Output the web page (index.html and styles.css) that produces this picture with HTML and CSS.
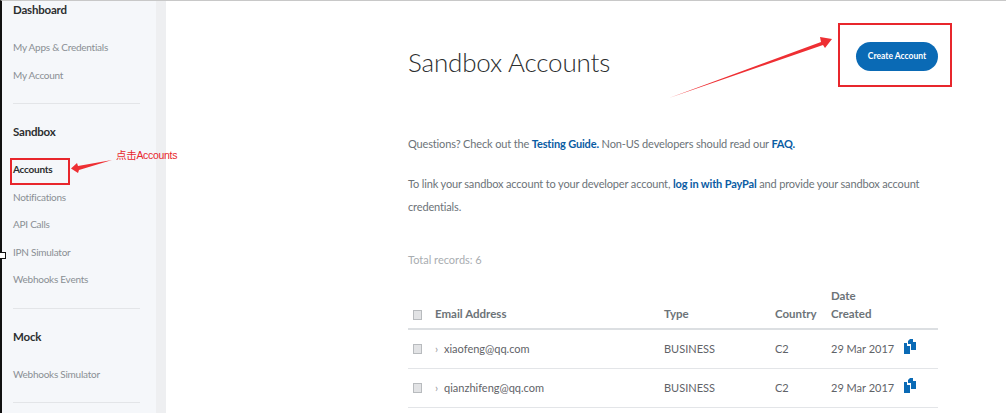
FILE: index.html
```html
<!DOCTYPE html>
<html lang="en">

<head>
    <meta charset="UTF-8">
    <title>Sandbox Accounts</title>
    <link rel="stylesheet" href="styles.css">
</head>

<body>
    <div class="page">
        <!--left menu-->
        <div class="side">
            <div class="group">
                <h4>Dashboard</h4>
                <a href="#">My Apps &amp; Credentials</a>
                <a href="#">My Account</a>
            </div>
            <div class="group">
                <h4>Sandbox</h4>
                <a href="#" class="current">Accounts</a>
                <a href="#">Notifications</a>
                <a href="#">API Calls</a>
                <a href="#">IPN Simulator</a>
                <a href="#">Webhooks Events</a>
            </div>
            <div class="group">
                <h4>Mock</h4>
                <a href="#">Webhooks Simulator</a>
            </div>
        </div>
        <div class="strip"></div>
        <!--main column-->
        <div class="main">
            <div class="head">
                <h1>Sandbox Accounts</h1>
                <a href="#" class="btn">Create Account</a>
            </div>
            <p class="one">Questions? Check out the <a href="#">Testing Guide.</a> Non-US developers should read our <a href="#">FAQ.</a></p>
            <p class="two">To link your sandbox account to your developer account, <a href="#">log in with PayPal</a> and provide your sandbox account credentials.</p>
            <p class="total">Total records: 6</p>
            <table>
                <thead>
                    <tr>
                        <th class="c1"><span class="check"></span></th>
                        <th class="c2">Email Address</th>
                        <th class="c3">Type</th>
                        <th class="c4">Country</th>
                        <th class="c5">Date<br>Created</th>
                        <th class="c6"></th>
                    </tr>
                </thead>
                <tbody>
                    <tr>
                        <td><span class="check"></span></td>
                        <td><span class="arrow">›</span>xiaofeng@qq.com</td>
                        <td>BUSINESS</td>
                        <td>C2</td>
                        <td>29 Mar 2017</td>
                        <td><svg class="copy" viewBox="0 0 13 15"><path d="M7 0h3v3h3v8h-5v-6h-3v-3z"/><path d="M1 4h3v3h3v8h-6z"/></svg></td>
                    </tr>
                    <tr>
                        <td><span class="check"></span></td>
                        <td><span class="arrow">›</span>qianzhifeng@qq.com</td>
                        <td>BUSINESS</td>
                        <td>C2</td>
                        <td>29 Mar 2017</td>
                        <td><svg class="copy" viewBox="0 0 13 15"><path d="M7 0h3v3h3v8h-5v-6h-3v-3z"/><path d="M1 4h3v3h3v8h-6z"/></svg></td>
                    </tr>
                </tbody>
            </table>
        </div>
    </div>

    <!--red marks drawn over the screenshot-->
    <div class="mark mark-menu"></div>
    <div class="mark mark-btn"></div>
    <span class="note">点击Accounts</span>
    <svg class="arrows" viewBox="0 0 1006 413">
        <path d="M112 160L78 166L77 163L71 168.500L78 173L79 170z"/>
        <path d="M669 98L821 42L820 37L832 39L825 48L823 45z"/>
    </svg>
    <div class="tick"></div>
</body>

</html>
```

FILE: styles.css
```css
* {
    margin: 0;
    padding: 0;
    box-sizing: border-box;
}

html,
body {
    height: 413px;
    overflow: hidden;
}

body {
    position: relative;
    background: #fff;
    font-family: Lato, "Open Sans", sans-serif;
    color: #5f6368;
}

a {
    text-decoration: none;
}

.page {
    display: flex;
    height: 413px;
    border-top: 1px solid #c8c8c8;
    border-left: 2px solid #111;
}

.side {
    width: 154px;
    padding-left: 11px;
    background: #f5f7fa;
    flex-shrink: 0;
}

.strip {
    width: 10px;
    background: #eeeff1;
    flex-shrink: 0;
}

.group {
    width: 127px;
    height: 205px;
    padding-top: 19px;
    border-bottom: 1px solid #e3e5e8;
}

.group:nth-child(1) {
    height: 103px;
    padding-top: 0;
}

.group:nth-child(3) {
    height: 94px;
}

.side h4 {
    font-size: 11.500px;
    font-weight: 700;
    line-height: 18px;
    letter-spacing: -0.2px;
    color: #2c2e2f;
    margin-bottom: 15px;
}

.side a {
    display: block;
    font-size: 10px;
    line-height: 27.600px;
    letter-spacing: -0.25px;
    color: #8a8f94;
}

.side a.current {
    color: #2c2e2f;
    font-weight: 700;
}

.main {
    width: 530px;
    margin-left: 242px;
    flex-shrink: 0;
}

.head {
    display: flex;
    justify-content: space-between;
    align-items: center;
    height: 112px;
}

.head h1 {
    font-size: 26px;
    font-weight: 300;
    line-height: 40px;
    letter-spacing: -0.2px;
    color: #2c2e2f;
    margin-top: 10px;
}

.btn {
    width: 82px;
    height: 29px;
    margin-top: -1px;
    border-radius: 15px;
    background: #0a6ab5;
    color: #fff;
    font-size: 8.500px;
    font-weight: 700;
    line-height: 29px;
    text-align: center;
}

.main p {
    font-size: 11px;
    line-height: 23px;
    letter-spacing: -0.15px;
    color: #6c7378;
}

.main p a {
    color: #0a5ca3;
    font-weight: 700;
}

.one {
    margin-top: 19px;
}

.two {
    margin-top: 17px;
}

.main p.total {
    margin-top: 30px;
    font-size: 11px;
    letter-spacing: 0;
    color: #a9adb1;
}

table {
    width: 530px;
    margin-top: 9px;
    border-collapse: collapse;
    table-layout: fixed;
}

th {
    height: 49px;
    padding-bottom: 5px;
    vertical-align: bottom;
    text-align: left;
    font-size: 11.500px;
    font-weight: 700;
    line-height: 18px;
    color: #6c7378;
    border-bottom: 2px solid #dcdfe2;
}

th.c1 {
    padding-bottom: 8px;
}

td {
    height: 39px;
    font-size: 11px;
    color: #5f6368;
    border-bottom: 1px solid #e3e5e8;
}

.c1 {
    width: 27px;
}

.c2 {
    width: 229px;
}

.c3 {
    width: 111px;
}

.c4 {
    width: 56px;
}

.c5 {
    width: 72px;
}

.check {
    display: block;
    width: 9px;
    height: 10px;
    margin-left: 5px;
    background: #e2e3e5;
    border: 1px solid #b8bbbe;
}

.arrow {
    display: inline-block;
    width: 9px;
    color: #999;
}

.copy {
    display: block;
    width: 13px;
    height: 15px;
    margin-top: -5px;
    fill: #0a6ab5;
}

.mark {
    position: absolute;
    border: 2px solid #e8262c;
}

.mark-menu {
    left: 10px;
    top: 158px;
    width: 60px;
    height: 27px;
}

.mark-btn {
    left: 838px;
    top: 23px;
    width: 114px;
    height: 64px;
}

.note {
    position: absolute;
    left: 116px;
    top: 147px;
    font-family: "Liberation Sans", "Noto Sans CJK SC", sans-serif;
    font-size: 10.500px;
    line-height: 16px;
    letter-spacing: -0.3px;
    color: #e8262c;
}

.arrows {
    position: absolute;
    left: 0;
    top: 0;
    width: 1006px;
    height: 413px;
    fill: #ee2f33;
}

.tick {
    position: absolute;
    left: 0;
    top: 252px;
    width: 6px;
    height: 7px;
    background: #fff;
    border: 1px solid #111;
    border-left: 0;
}
```
